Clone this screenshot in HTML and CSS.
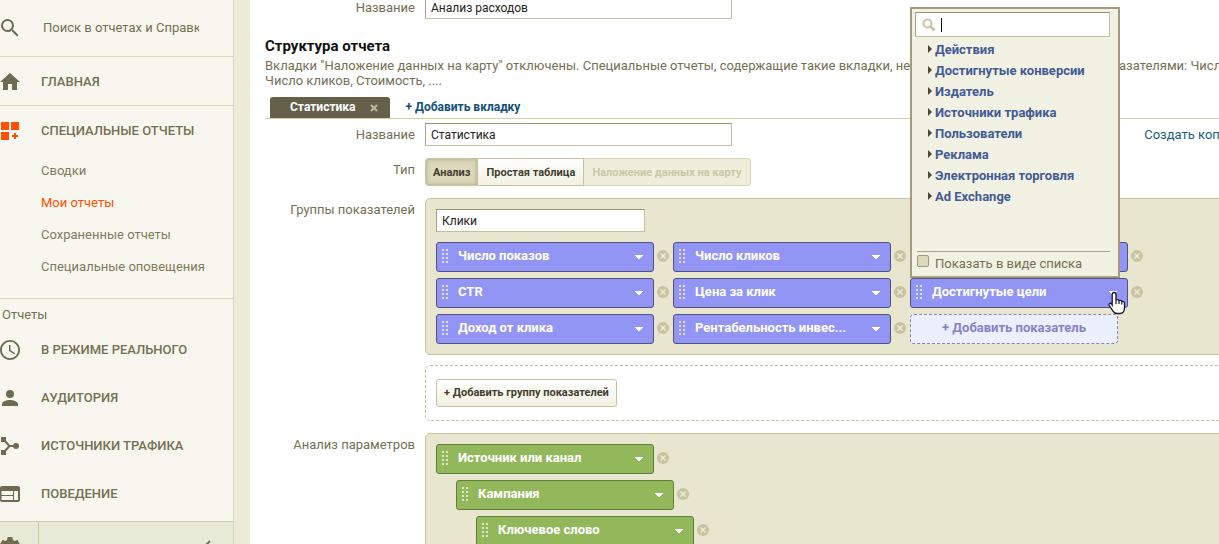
FILE: index.html
```html
<!DOCTYPE html>
<html lang="ru">
<head>
<meta charset="utf-8">
<title>Специальные отчеты</title>
<link rel="stylesheet" href="styles.css">
</head>
<body>
<svg class="defs" aria-hidden="true">
  <symbol id="grip" viewBox="0 0 6 14"><path d="M0 0h2v2H0zM4 0h2v2H4zM0 4h2v2H0zM4 4h2v2H4zM0 8h2v2H0zM4 8h2v2H4zM0 12h2v2H0zM4 12h2v2H4z"/></symbol>
  <symbol id="caret" viewBox="0 0 10 5"><path d="M1 0h8v1H8v1H7v1H6v1H4V3H3V2H2V1H1z"/></symbol>
  <symbol id="remove" viewBox="0 0 12 12"><circle cx="6" cy="6" r="6" fill="#c8c3a0"/><path d="M3.500 3.500l5 5m0-5l-5 5" stroke="#f0eeda" stroke-width="1.300"/></symbol>
  <symbol id="tri" viewBox="0 0 4 8"><path d="M0 0l4 4-4 4z"/></symbol>
</svg>
<div class="app">
  <aside class="sidebar">
    <nav class="nav">
      <label class="nav-search">
        <svg class="nav-icon" viewBox="2 2 20 20"><path d="M15.500 14h-.79l-.28-.27A6.471 6.471 0 0 0 16 9.500 6.500 6.500 0 1 0 9.500 16c1.610 0 3.090-.59 4.230-1.570l.27.28v.79l5 4.990L20.490 19l-4.990-5zm-6 0C7.010 14 5 11.990 5 9.500S7.010 5 9.500 5 14 7.010 14 9.500 11.990 14 9.500 14z"/></svg>
        <input class="nav-input" type="text" placeholder="Поиск в отчетах и Справке" aria-label="Поиск в отчетах и Справке">
      </label>
      <a class="nav-item nav-line" href="#"><svg class="nav-icon" viewBox="2 2 20 20"><path d="M10 20v-6h4v6h5v-8h3L12 3 2 12h3v8z"/></svg>ГЛАВНАЯ</a>
      <a class="nav-item" href="#"><svg class="nav-icon accent" viewBox="0 0 20 20"><path d="M1 1h8v8H1zM11 1h8v8h-8zM1 11h8v8H1zM14 12h2v2h2v2h-2v2h-2v-2h-2v-2h2z"/></svg>СПЕЦИАЛЬНЫЕ ОТЧЕТЫ</a>
      <div class="subnav">
        <a href="#">Сводки</a>
        <a class="active" href="#">Мои отчеты</a>
        <a href="#">Сохраненные отчеты</a>
        <a href="#">Специальные оповещения</a>
      </div>
      <div class="nav-caption">Отчеты</div>
      <a class="nav-item" href="#"><svg class="nav-icon" viewBox="2 2 20 20"><path d="M11.990 2C6.470 2 2 6.480 2 12s4.470 10 9.990 10C17.520 22 22 17.520 22 12S17.520 2 11.990 2zM12 20.200a8.200 8.200 0 1 1 0-16.400 8.200 8.200 0 0 1 0 16.400zM12.500 7H11v6l5.250 3.150.75-1.230-4.500-2.670z"/></svg>В РЕЖИМЕ РЕАЛЬНОГО</a>
      <a class="nav-item" href="#"><svg class="nav-icon" viewBox="2 2 20 20"><path d="M12 12a4 4 0 1 0 0-8 4 4 0 0 0 0 8zm0 2c-2.670 0-8 1.340-8 4v2h16v-2c0-2.660-5.330-4-8-4z"/></svg>АУДИТОРИЯ</a>
      <a class="nav-item" href="#"><svg class="nav-icon" viewBox="0 0 20 20"><path d="M1 1h5v5H1zM1 14h5v5H1z"/><circle cx="16" cy="10" r="3"/><path d="M4 4l5.500 6L4 16M9 10h6" fill="none" stroke="currentColor" stroke-width="2"/></svg>ИСТОЧНИКИ ТРАФИКА</a>
      <a class="nav-item" href="#"><svg class="nav-icon" viewBox="2 2 20 20"><path d="M20 4H4c-1.100 0-2 .9-2 2v12c0 1.100.9 2 2 2h16c1.100 0 2-.9 2-2V6c0-1.100-.9-2-2-2zm-5 14H3.500v-4H15v4zm0-5H3.500V9H15v4zm5 5h-4V9h4v9z"/></svg>ПОВЕДЕНИЕ</a>
    </nav>
    <div class="nav-footer">
      <button class="gear" type="button" aria-label="Настройки"><svg class="nav-icon" viewBox="2 2 20 20"><path d="M19.430 12.980c.04-.32.07-.64.07-.98s-.03-.66-.07-.98l2.110-1.650c.19-.15.24-.42.12-.64l-2-3.460c-.12-.22-.39-.3-.61-.22l-2.490 1c-.52-.4-1.080-.73-1.690-.98l-.38-2.650A.49.49 0 0 0 14 2h-4c-.25 0-.46.18-.49.42l-.38 2.650c-.61.25-1.170.59-1.690.98l-2.490-1c-.23-.09-.49 0-.61.22l-2 3.460c-.13.22-.07.49.12.64l2.110 1.650c-.04.32-.07.65-.07.98s.03.66.07.98l-2.110 1.650 2.120 4.320 3.100-.8 1.690.98.380 2.650h5.100l.38-2.650 1.690-.98 3.100.8 2-3.460z"/></svg></button>
      <button class="collapse" type="button" aria-label="Свернуть"><svg viewBox="0 0 8 12"><path d="M7 1L2 6l5 5" fill="none" stroke="currentColor" stroke-width="2"/></svg></button>
    </div>
  </aside>

  <main class="main">
    <div class="editor">
      <div class="row row-top">
        <label class="label" for="report-name">Название</label>
        <input class="text-input wide" id="report-name" type="text" value="Анализ расходов">
      </div>
      <h2 class="title">Структура отчета</h2>
      <p class="note">Вкладки "Наложение данных на карту" отключены. Специальные отчеты, содержащие такие вкладки, не совместимы со следующими показателями: Число показов,<br>Число кликов, Стоимость, ....</p>
      <div class="tabs">
        <div class="tab">Статистика<button class="tab-close" type="button" aria-label="Закрыть вкладку"><svg viewBox="0 0 8 8"><path d="M1 1l6 6m0-6L1 7" stroke="currentColor" stroke-width="2"/></svg></button></div>
        <a class="add-tab" href="#">+ Добавить вкладку</a>
      </div>
      <div class="row row-name">
        <label class="label" for="tab-name">Название</label>
        <input class="text-input wide" id="tab-name" type="text" value="Статистика">
        <a class="copy-link" href="#">Создать копию</a>
      </div>
      <div class="row row-type">
        <span class="label">Тип</span>
        <div class="segmented">
          <button class="segment selected" type="button">Анализ</button>
          <button class="segment" type="button">Простая таблица</button>
          <button class="segment" type="button" disabled>Наложение данных на карту</button>
        </div>
      </div>
      <div class="row row-panel">
        <label class="label" for="group-name">Группы показателей</label>
        <div class="panel">
          <input class="text-input group" id="group-name" type="text" value="Клики">
          <div class="metrics">
            <div class="cell"><button class="pill" type="button"><svg class="grip"><use href="#grip"/></svg><span class="pill-text">Число показов</span><svg class="caret"><use href="#caret"/></svg></button><button class="remove" type="button" aria-label="Удалить"><svg><use href="#remove"/></svg></button></div>
            <div class="cell"><button class="pill" type="button"><svg class="grip"><use href="#grip"/></svg><span class="pill-text">Число кликов</span><svg class="caret"><use href="#caret"/></svg></button><button class="remove" type="button" aria-label="Удалить"><svg><use href="#remove"/></svg></button></div>
            <div class="cell"><button class="pill" type="button" aria-label="Показатель"><svg class="grip"><use href="#grip"/></svg><span class="pill-text"></span><svg class="caret"><use href="#caret"/></svg></button><button class="remove" type="button" aria-label="Удалить"><svg><use href="#remove"/></svg></button></div>
            <div class="cell"><button class="pill" type="button"><svg class="grip"><use href="#grip"/></svg><span class="pill-text">CTR</span><svg class="caret"><use href="#caret"/></svg></button><button class="remove" type="button" aria-label="Удалить"><svg><use href="#remove"/></svg></button></div>
            <div class="cell"><button class="pill" type="button"><svg class="grip"><use href="#grip"/></svg><span class="pill-text">Цена за клик</span><svg class="caret"><use href="#caret"/></svg></button><button class="remove" type="button" aria-label="Удалить"><svg><use href="#remove"/></svg></button></div>
            <div class="cell open"><button class="pill" type="button"><svg class="grip"><use href="#grip"/></svg><span class="pill-text">Достигнутые цели</span><svg class="caret"><use href="#caret"/></svg></button><button class="remove" type="button" aria-label="Удалить"><svg><use href="#remove"/></svg></button>
              <svg class="pointer" viewBox="0 0 18 24"><path d="M6 1.500c1.200 0 2 .8 2 2V9c.3-.6 2.600-.6 3 .6.600-.6 2.500-.3 2.800.9 1-.5 2.700 0 2.700 1.700v4.300c0 3.300-1.500 6-4.500 6H9c-2 0-3.200-1-4.200-2.700L1.300 14.500c-.9-1.800 1-3 2.200-1.700L4.200 14V3.500c0-1.200.8-2 1.800-2z" fill="#fff" stroke="#15152a" stroke-width="1.300"/><path d="M8 9v4M11 10v3M13.800 11v2.500" stroke="#15152a" stroke-width="1.200"/></svg>
              <div class="popup">
                <label class="popup-search">
                  <svg viewBox="0 0 14 14"><circle cx="5.500" cy="5.500" r="4" fill="none" stroke="currentColor" stroke-width="2"/><path d="M8.500 8.500l4 4" stroke="currentColor" stroke-width="3"/></svg>
                  <span class="cursor"></span>
                  <input type="text" aria-label="Поиск показателя">
                </label>
                <ul class="popup-list">
                  <li><a href="#"><svg><use href="#tri"/></svg>Действия</a></li>
                  <li><a href="#"><svg><use href="#tri"/></svg>Достигнутые конверсии</a></li>
                  <li><a href="#"><svg><use href="#tri"/></svg>Издатель</a></li>
                  <li><a href="#"><svg><use href="#tri"/></svg>Источники трафика</a></li>
                  <li><a href="#"><svg><use href="#tri"/></svg>Пользователи</a></li>
                  <li><a href="#"><svg><use href="#tri"/></svg>Реклама</a></li>
                  <li><a href="#"><svg><use href="#tri"/></svg>Электронная торговля</a></li>
                  <li><a href="#"><svg><use href="#tri"/></svg>Ad Exchange</a></li>
                </ul>
                <label class="popup-option"><input type="checkbox"><span>Показать в виде списка</span></label>
              </div>
            </div>
            <div class="cell"><button class="pill" type="button"><svg class="grip"><use href="#grip"/></svg><span class="pill-text">Доход от клика</span><svg class="caret"><use href="#caret"/></svg></button><button class="remove" type="button" aria-label="Удалить"><svg><use href="#remove"/></svg></button></div>
            <div class="cell"><button class="pill" type="button"><svg class="grip"><use href="#grip"/></svg><span class="pill-text">Рентабельность инвес...</span><svg class="caret"><use href="#caret"/></svg></button><button class="remove" type="button" aria-label="Удалить"><svg><use href="#remove"/></svg></button></div>
            <button class="add-metric" type="button">+ Добавить показатель</button>
          </div>
        </div>
      </div>
      <div class="row row-add">
        <span class="label"></span>
        <div class="dropzone"><button class="add-group" type="button">+ Добавить группу показателей</button></div>
      </div>
      <div class="row row-panel">
        <span class="label">Анализ параметров</span>
        <div class="panel dimensions">
          <div class="cell"><button class="pill green" type="button"><svg class="grip"><use href="#grip"/></svg><span class="pill-text">Источник или канал</span><svg class="caret"><use href="#caret"/></svg></button><button class="remove" type="button" aria-label="Удалить"><svg><use href="#remove"/></svg></button></div>
          <div class="cell level-2"><button class="pill green" type="button"><svg class="grip"><use href="#grip"/></svg><span class="pill-text">Кампания</span><svg class="caret"><use href="#caret"/></svg></button><button class="remove" type="button" aria-label="Удалить"><svg><use href="#remove"/></svg></button></div>
          <div class="cell level-3"><button class="pill green" type="button"><svg class="grip"><use href="#grip"/></svg><span class="pill-text">Ключевое слово</span><svg class="caret"><use href="#caret"/></svg></button><button class="remove" type="button" aria-label="Удалить"><svg><use href="#remove"/></svg></button></div>
        </div>
      </div>
    </div>
  </main>
</div>
</body>
</html>
```
FILE: styles.css
```css
* { box-sizing: border-box; }
body {
  margin: 0;
  overflow: hidden;
  background: #fff;
  color: #757052;
  font: 13px/15px Roboto, sans-serif;
}
button, input { font: inherit; color: inherit; margin: 0; padding: 0; }
button { border: 0; background: none; }
a { color: inherit; text-decoration: none; }
svg { display: block; flex: none; fill: currentColor; }
.defs { display: none; }
.app { display: flex; height: 100vh; }

/* Sidebar */
.sidebar {
  flex: 0 0 234px;
  display: flex;
  flex-direction: column;
  background: #f8f7ef;
  border-right: 1px solid #d3d4c8;
}
.nav { flex: 1; min-height: 0; overflow: hidden; }
.nav-icon { width: 20px; height: 20px; color: #706a50; }
.accent { color: #ff4f04; }
.nav-search {
  display: flex;
  align-items: center;
  gap: 23px;
  height: 57px;
  padding-bottom: 2px;
  border-bottom: 1px solid #d9d7b5;
}
.nav-search .nav-icon, .nav-item .nav-icon { margin-top: 2px; }
.nav-input { width: 156px; border: 0; outline: 0; background: none; }
.nav-input::placeholder { color: #757052; opacity: 1; }
.nav-item {
  display: flex;
  align-items: center;
  gap: 21px;
  height: 48px;
  font-weight: 500;
}
.nav-line { height: 49px; border-bottom: 1px solid #d9d7b5; }
.subnav {
  display: flex;
  flex-direction: column;
  padding: 1px 0 15px;
  border-bottom: 1px solid #d9d7b5;
  color: #817b5c;
}
.subnav a { padding-left: 41px; line-height: 32px; }
.subnav .active { color: #ff4f04; }
.nav-caption { padding: 8px 2px 3px; }
.nav-footer {
  display: flex;
  height: 23px;
  overflow: hidden;
  background: #e6ead6;
  border-top: 1px solid #cfcdb0;
}
.gear { width: 39px; padding-top: 15px; border-right: 1px solid #c8c49f; }
.nav-footer button { display: flex; align-items: flex-start; }
.collapse { margin-left: auto; padding: 18px 22px 0 0; }
.collapse svg { width: 8px; height: 12px; }

/* Report editor */
.main {
  flex: 1;
  min-width: 0;
  overflow: hidden;
  padding-left: 15px;
  border-left: 16px solid #ecebd7;
}
.editor { margin-right: -60px; }
.row { display: flex; gap: 10px; }
.label { flex: 0 0 150px; text-align: right; line-height: 23px; }
.row-top { margin-top: -4px; }
.text-input {
  height: 23px;
  padding: 0 5px;
  border: 1px solid #c4bf9e;
  border-top-color: #9b9574;
  border-left-color: #aaa482;
  outline: 0;
  background: #fff;
  color: #25231a;
  font-size: 12px;
}
.wide { width: 307px; }
.group { display: block; width: 209px; }
.title { margin: 17px 0 2px; color: #111; font-size: 15px; line-height: 20px; font-weight: 700; }
.note { margin: 0; white-space: nowrap; }
.tabs {
  display: flex;
  align-items: center;
  gap: 15px;
  margin-top: 9px;
  padding-left: 5px;
  border-bottom: 1px solid #d6d2a8;
  font-size: 12px;
  font-weight: 700;
}
.tab {
  display: flex;
  align-items: center;
  gap: 15px;
  height: 21px;
  padding: 0 12px 0 20px;
  border-radius: 3px 3px 0 0;
  background: #66604b;
  color: #fff;
}
.tab-close { color: #bdb89d; }
.tab-close svg { width: 8px; height: 8px; }
.add-tab { color: #14507a; }
.row-name { margin-top: 4px; }
.copy-link { margin-left: auto; margin-right: 41px; line-height: 23px; color: #1c5c7a; }
.row-type { margin-top: 12px; }
.segmented { display: flex; }
.segment, .add-group {
  height: 28px;
  padding: 0 8px;
  border: 1px solid #c8c39e;
  background: linear-gradient(#fff, #f1f0e2);
  color: #423e2d;
  font-size: 11px;
  font-weight: 700;
}
.segment + .segment { border-left: 0; }
.segment:first-child { padding: 0 7px; border-radius: 4px 0 0 4px; }
.segment:last-child { border-radius: 0 4px 4px 0; }
.segment.selected { background: #dcd8bc; box-shadow: inset 0 0 4px #aaa47f; }
.segment:disabled { background: #efeedd; border-color: #d6d4b6; color: #cbc6a5; }
.row-panel { margin-top: 12px; }
.panel {
  flex: 1;
  padding: 10px;
  border: 1px solid #c8c39e;
  border-radius: 5px;
  background: #e9e6cf;
}
.metrics {
  display: grid;
  grid-template-columns: repeat(3, 237px);
  row-gap: 6px;
  margin-top: 10px;
}
.cell { position: relative; display: flex; align-items: center; gap: 3px; }
.pill {
  display: flex;
  width: 218px;
  height: 30px;
  padding: 5px 9px 0 5px;
  border: 1px solid #52507c;
  border-radius: 3px;
  background: #9395f5;
  color: #fff;
  font-weight: 700;
  text-align: left;
}
.green { background: #93b85c; border-color: #5f803a; }
.pill-text { flex: 1; margin-left: 10px; }
.grip { width: 6px; height: 14px; margin-top: 1px; opacity: .7; }
.caret { width: 10px; height: 5px; margin-top: 7px; }
.remove { padding-bottom: 2px; }
.remove svg { width: 12px; height: 12px; }
.add-metric {
  width: 208px;
  height: 30px;
  padding-bottom: 3px;
  border: 1px dashed #8583c4;
  border-radius: 4px;
  background: #eceffd;
  color: #8583c4;
  font-weight: 700;
}
.row-add { margin-top: 10px; }
.dropzone {
  flex: 1;
  padding: 13px 10px;
  border: 1px dashed #c3bf9c;
  border-radius: 5px;
}
.add-group { padding: 0 7px 2px; border-radius: 3px; }
.dimensions { display: grid; gap: 6px; }
.level-2 { margin-left: 20px; }
.level-3 { margin-left: 40px; }

/* Metric picker */
.popup {
  position: absolute;
  z-index: 2;
  left: 0;
  bottom: 100%;
  width: 210px;
  height: 271px;
  display: flex;
  flex-direction: column;
  padding: 3px 8px 3px 3px;
  border: 2px solid #a29b7d;
  background: #f2f2e4;
}
.popup-search {
  display: flex;
  align-items: center;
  height: 25px;
  padding: 0 6px;
  border: 1px solid #c4bf9e;
  border-top-color: #9b9574;
  border-left-color: #aaa482;
  background: #fff;
  color: #c9c4a0;
}
.popup-search svg { width: 14px; height: 14px; }
.popup-search input { flex: 1; min-width: 0; border: 0; outline: 0; background: none; }
.cursor { width: 1px; height: 14px; margin-left: 5px; background: #111; }
.popup-list { flex: 1; margin: 0; padding: 2px 0 0 13px; list-style: none; }
.popup-list a {
  display: flex;
  align-items: center;
  gap: 3px;
  height: 21px;
  color: #435a94;
  font-weight: 700;
}
.popup-list svg { width: 4px; height: 8px; margin-bottom: 2px; color: #4b4735; }
.popup-option {
  display: flex;
  gap: 6px;
  margin-left: 2px;
  padding: 3px 0 1px;
  border-top: 1px solid #a9a387;
}
.popup-option input {
  appearance: none;
  width: 12px;
  height: 12px;
  border: 1px solid #a09a7c;
  border-radius: 2px;
  background: #dbd7bd;
}
.popup-option span { line-height: 17px; }
.pointer { position: absolute; z-index: 3; left: 198px; top: 13px; width: 18px; height: 24px; }
```
